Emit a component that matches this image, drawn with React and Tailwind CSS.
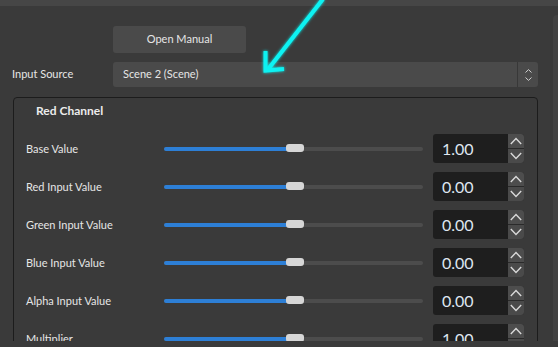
import React from "react";

const font = { fontFamily: "Lato, 'Open Sans', sans-serif" };

function UpChevron({ className = "" }) {
  return (
    <svg width="12" height="8" viewBox="0 0 12 8" className={className}>
      <polyline points="0.8,7 6,1.5 11.2,7" fill="none" stroke="#d8d8d8" strokeWidth="1.4" />
    </svg>
  );
}
function DownChevron({ className = "" }) {
  return (
    <svg width="12" height="8" viewBox="0 0 12 8" className={className}>
      <polyline points="0.8,1 6,6.5 11.2,1" fill="none" stroke="#d8d8d8" strokeWidth="1.4" />
    </svg>
  );
}

function Row({ label, value }) {
  return (
    <div className="flex items-center h-[29px]">
      <div className="w-[150px] pl-[12px] text-[11px] text-[#e6e6e6] leading-none" style={font}>
        {label}
      </div>
      <div className="relative w-[259px] h-[9px] flex items-center">
        <div className="w-full h-[4px] rounded-full bg-[#4c4c4c]" />
        <div className="absolute left-0 top-[2.5px] w-[126px] h-[4px] rounded-l-full bg-[#2d7fd6]" />
        <div className="absolute left-[122px] top-0 w-[18px] h-[8px] rounded-[3px] bg-[#d6d6d6]" />
      </div>
      <div className="ml-[10px] w-[91px] h-[29px] rounded-[3px] bg-[#1e1e1e] flex">
        <div className="flex-1 flex items-center pl-[9px] text-[16px] text-[#dfe6f0]" style={font}>
          {value}
        </div>
        <div className="w-[16px] flex flex-col rounded-r-[3px] overflow-hidden">
          <div className="flex-1 bg-[#4d4d4d] flex items-center justify-center">
            <UpChevron />
          </div>
          <div className="h-px bg-[#2a2a2a]" />
          <div className="flex-1 bg-[#4a4a4a] flex items-center justify-center">
            <DownChevron />
          </div>
        </div>
      </div>
    </div>
  );
}

export default function App() {
  const rows = [
    ["Base Value", "1.00"],
    ["Red Input Value", "0.00"],
    ["Green Input Value", "0.00"],
    ["Blue Input Value", "0.00"],
    ["Alpha Input Value", "0.00"],
    ["Multiplier", "1.00"],
  ];
  return (
    <div className="relative w-[558px] h-[347px] bg-[#3a3a3a] overflow-hidden" style={font}>
      <div className="h-[6px] bg-[#464646]" />
      <div className="flex h-[335px]">
        <div className="w-[553px] h-full overflow-hidden">
          <div className="pt-[20px] pl-[113px]">
            <div className="w-[133px] h-[27px] rounded-[3px] bg-[#4a4a4a] flex items-center justify-center text-[11px] text-[#e6e6e6]">
              Open Manual
            </div>
          </div>
          <div className="mt-[9px] flex items-center">
            <div className="w-[113px] pl-[12px] text-[11px] text-[#e6e6e6]">Input Source</div>
            <div className="w-[425px] h-[25px] rounded-[3px] bg-[#4a4a4a] flex">
              <div className="flex-1 flex items-center pl-[10px] text-[11px] text-[#e6e6e6]">
                Scene 2 (Scene)
              </div>
              <div className="w-px bg-[#383838]" />
              <div className="w-[20px] flex flex-col items-center justify-center gap-[4px]">
                <svg width="7" height="4" viewBox="0 0 7 4">
                  <polyline points="0.5,3.5 3.5,0.6 6.5,3.5" fill="none" stroke="#cfcfcf" strokeWidth="1" />
                </svg>
                <svg width="7" height="4" viewBox="0 0 7 4">
                  <polyline points="0.5,0.5 3.5,3.4 6.5,0.5" fill="none" stroke="#cfcfcf" strokeWidth="1" />
                </svg>
              </div>
            </div>
          </div>
          <div className="mt-[10px] ml-[13px] w-[525px] border border-[#1c1c1c] rounded-[4px] pb-[20px]">
            <div className="pt-[4px] pl-[22px] h-[20px] text-[12px] font-bold text-[#ececec] leading-[17px]">
              Red Channel
            </div>
            <div className="mt-[16px] flex flex-col gap-[9px]">
              {rows.map(([l, v]) => (
                <Row key={l} label={l} value={v} />
              ))}
            </div>
          </div>
        </div>
        <div className="w-[5px] mt-[9px] h-[326px] rounded-tl-[4px] bg-[#424242]" />
      </div>

      <svg
        className="absolute left-0 top-0 pointer-events-none"
        width="558"
        height="347"
        viewBox="0 0 558 347"
      >
        <defs>
          <filter id="glow" x="-20%" y="-20%" width="140%" height="140%">
            <feGaussianBlur stdDeviation="1.5" result="b" />
            <feMerge>
              <feMergeNode in="b" />
              <feMergeNode in="SourceGraphic" />
            </feMerge>
          </filter>
        </defs>
        <g filter="url(#glow)" stroke="#10f2f2" strokeWidth="4" fill="none" strokeLinecap="butt">
          <line x1="323" y1="-1" x2="267.5" y2="70" />
          <polyline points="265.5,51 265.5,70.5 284,69" strokeLinejoin="miter" />
        </g>
      </svg>
    </div>
  );
}
